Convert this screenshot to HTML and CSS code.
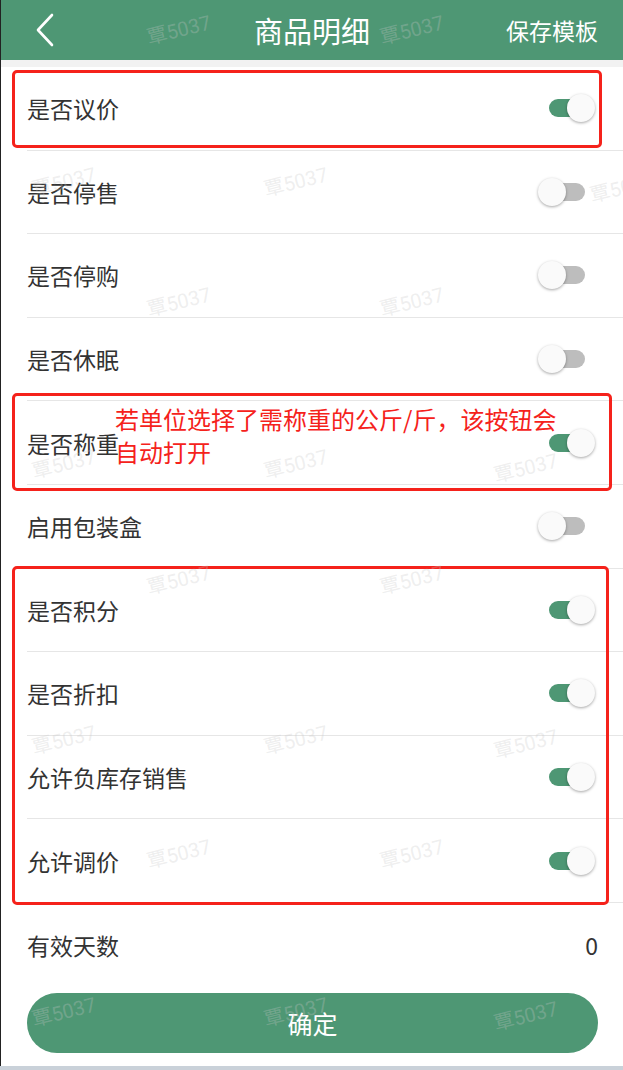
FILE: index.html
```html
<!DOCTYPE html>
<html lang="zh-CN">
<head>
    <meta charset="UTF-8">
    <meta name="viewport" content="width=device-width, initial-scale=1.0">
    <title>商品明细</title>
    <link rel="stylesheet" href="styles.css">
</head>
<body>
    <div class="page">
        <div class="header">
            <svg class="back" width="22" height="34" viewBox="0 0 22 34">
                <polyline points="18,2 4,17 18,32" fill="none" stroke="#fff" stroke-width="2.6" stroke-linecap="round" stroke-linejoin="round"/>
            </svg>
            <div class="title">商品明细</div>
            <div class="save">保存模板</div>
        </div>
        <div class="gap"></div>

        <div class="list">
            <div class="row"><span class="label">是否议价</span><span class="switch on"><i></i></span></div>
            <div class="row"><span class="label">是否停售</span><span class="switch"><i></i></span></div>
            <div class="row"><span class="label">是否停购</span><span class="switch"><i></i></span></div>
            <div class="row"><span class="label">是否休眠</span><span class="switch"><i></i></span></div>
            <div class="row"><span class="label">是否称重</span><span class="switch on"><i></i></span></div>
            <div class="row"><span class="label">启用包装盒</span><span class="switch"><i></i></span></div>
            <div class="row"><span class="label">是否积分</span><span class="switch on"><i></i></span></div>
            <div class="row"><span class="label">是否折扣</span><span class="switch on"><i></i></span></div>
            <div class="row"><span class="label">允许负库存销售</span><span class="switch on"><i></i></span></div>
            <div class="row"><span class="label">允许调价</span><span class="switch on"><i></i></span></div>
            <div class="row last"><span class="label">有效天数</span><span class="value">0</span></div>
        </div>

        <div class="footer">
            <button class="confirm">确定</button>
        </div>

        <!-- 标注 -->
        <div class="mark box1"></div>
        <div class="mark box2"></div>
        <div class="mark box3"></div>
        <div class="note">若单位选择了需称重的公斤/斤，该按钮会<br>自动打开</div>

        <!-- 水印 -->
        <span class="wm" style="left:145px;top:14px">覃5037</span>
        <span class="wm" style="left:378px;top:14px">覃5037</span>
        <span class="wm" style="left:30px;top:166px">覃5037</span>
        <span class="wm" style="left:262px;top:166px">覃5037</span>
        <span class="wm" style="left:588px;top:172px">覃5037</span>
        <span class="wm" style="left:145px;top:286px">覃5037</span>
        <span class="wm" style="left:378px;top:286px">覃5037</span>
        <span class="wm" style="left:30px;top:448px">覃5037</span>
        <span class="wm" style="left:262px;top:448px">覃5037</span>
        <span class="wm" style="left:492px;top:452px">覃5037</span>
        <span class="wm" style="left:145px;top:564px">覃5037</span>
        <span class="wm" style="left:378px;top:564px">覃5037</span>
        <span class="wm" style="left:30px;top:724px">覃5037</span>
        <span class="wm" style="left:262px;top:724px">覃5037</span>
        <span class="wm" style="left:492px;top:728px">覃5037</span>
        <span class="wm" style="left:145px;top:838px">覃5037</span>
        <span class="wm" style="left:378px;top:838px">覃5037</span>
        <span class="wm" style="left:30px;top:996px">覃5037</span>
        <span class="wm" style="left:262px;top:996px">覃5037</span>
        <span class="wm" style="left:492px;top:1000px">覃5037</span>
    </div>
    <div class="bottom-bar"></div>
</body>
</html>
```

FILE: styles.css
```css
body {
    margin: 0;
    width: 623px;
    height: 1070px;
    overflow: hidden;
    font-family: "Noto Sans CJK SC", "Noto Sans", sans-serif;
    background-color: #fff;
    color: #333;
}
.page {
    position: relative;
    height: 1066px;
    border-left: 1px solid #222;
    overflow: hidden;
}
.header {
    height: 60px;
    background-color: #4e9774;
    display: flex;
    align-items: center;
    color: #fff;
    position: relative;
}
.header .back {
    margin-left: 33px;
}
.header .title {
    position: absolute;
    left: 0;
    right: 0;
    text-align: center;
    font-size: 29px;
    line-height: 60px;
    pointer-events: none;
}
.header .save {
    margin-left: auto;
    margin-right: 25px;
    font-size: 23px;
}
.gap {
    height: 7px;
    background-color: #f2f2f2;
}
.row {
    box-sizing: border-box;
    height: 83.6px;
    margin-left: 26px;
    padding-right: 38px;
    display: flex;
    align-items: center;
    border-bottom: 1px solid #e6e6e6;
}
.row.last {
    border-bottom: none;
    padding-right: 25px;
}
.label {
    font-size: 23px;
    flex: 1;
}
.value {
    font-size: 23px;
}
.switch {
    position: relative;
    width: 36px;
    height: 18px;
    border-radius: 9px;
    background-color: #bdbdbd;
}
.switch i {
    position: absolute;
    top: -5px;
    left: -11px;
    width: 28px;
    height: 28px;
    border-radius: 50%;
    background-color: #fafafa;
    box-shadow: 0 1px 3px rgba(0, 0, 0, 0.35);
}
.switch.on {
    background-color: #4e9774;
}
.switch.on i {
    left: 18px;
}
.footer {
    padding: 6px 25px 0 26px;
}
.confirm {
    display: block;
    width: 100%;
    height: 60px;
    border: none;
    border-radius: 30px;
    background-color: #4e9774;
    color: #fff;
    font-family: inherit;
    font-size: 25px;
}
.mark {
    position: absolute;
    border: 3px solid #f5221b;
    border-radius: 5px;
}
.box1 {
    left: 11px;
    top: 70px;
    width: 584px;
    height: 72px;
}
.box2 {
    left: 11px;
    top: 393px;
    width: 594px;
    height: 92px;
}
.box3 {
    left: 11px;
    top: 566px;
    width: 591px;
    height: 333px;
}
.note {
    position: absolute;
    left: 114px;
    top: 402px;
    color: #f5221b;
    font-size: 24px;
    line-height: 33px;
}
.wm {
    position: absolute;
    font-family: "Roboto", "Noto Sans CJK SC", sans-serif;
    font-size: 20px;
    color: rgba(200, 200, 200, 0.3);
    transform: rotate(-14deg);
    white-space: nowrap;
}
.bottom-bar {
    height: 4px;
    background-color: #c9d1d9;
}
```
